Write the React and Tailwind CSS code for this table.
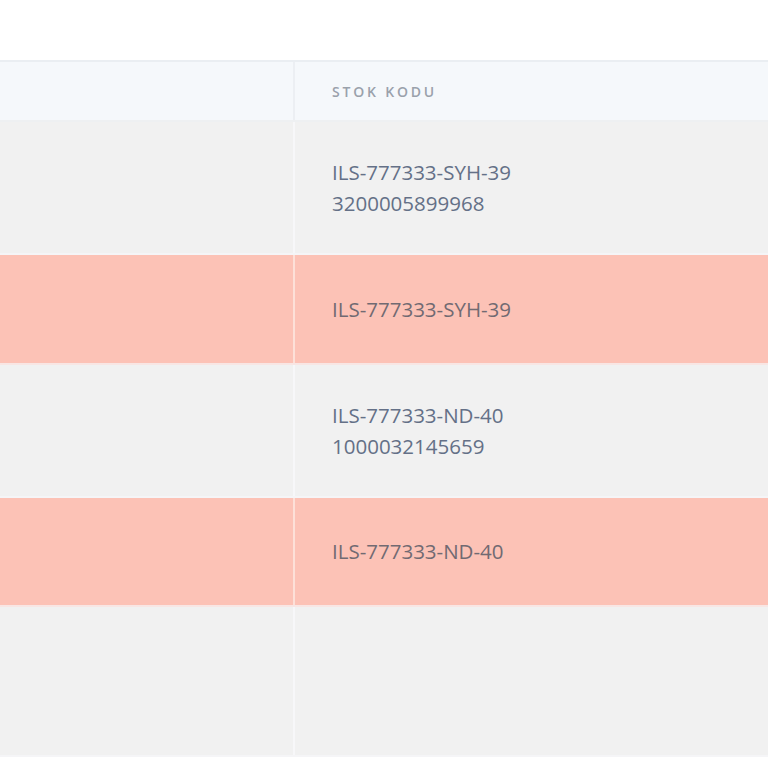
import React from 'react';

const rows = [
  { lines: ['ILS-777333-SYH-39', '3200005899968'], warn: false, h: 'h-[133px]' },
  { lines: ['ILS-777333-SYH-39'], warn: true, h: 'h-[110px]' },
  { lines: ['ILS-777333-ND-40', '1000032145659'], warn: false, h: 'h-[133px]' },
  { lines: ['ILS-777333-ND-40'], warn: true, h: 'h-[109px]' },
  { lines: [], warn: false, h: 'h-[150px]' },
];

const App = () => {
  return (
    <div className="w-[768px] h-[768px] bg-white overflow-hidden font-['Open_Sans',sans-serif]">
      <div className="h-[60px]" />
      <div className="border-t-2 border-[#eaeef2]">
        <div className="grid grid-cols-[295px_1fr] h-[60px] bg-[#f5f8fb] border-b-2 border-[#eef0f2]">
          <div className="border-r-2 border-[#eceff3]" />
          <div className="flex items-center pl-[37px]">
            <span className="text-[14px] font-semibold tracking-[0.2em] text-[#9aa1ab]">STOK KODU</span>
          </div>
        </div>
        {rows.map((row, i) => (
          <div
            key={i}
            className={`grid grid-cols-[295px_1fr] ${row.h} border-b-2 ${
              row.warn ? 'bg-[#fcc2b6] border-[#f8e6e4]' : 'bg-[#f1f1f1] border-[#f5f5f7]'
            }`}
          >
            <div className={`border-r-2 ${row.warn ? 'border-[#fde0d8]' : 'border-[#f7f7f9]'}`} />
            <div className="flex flex-col justify-center pl-[37px]">
              {row.lines.map((line) => (
                <p
                  key={line}
                  className={`text-[20.5px] leading-[31px] ${
                    row.warn ? 'text-[#716a72]' : 'text-[#647087]'
                  }`}
                >
                  {line}
                </p>
              ))}
            </div>
          </div>
        ))}
      </div>
    </div>
  );
};

export default App;
